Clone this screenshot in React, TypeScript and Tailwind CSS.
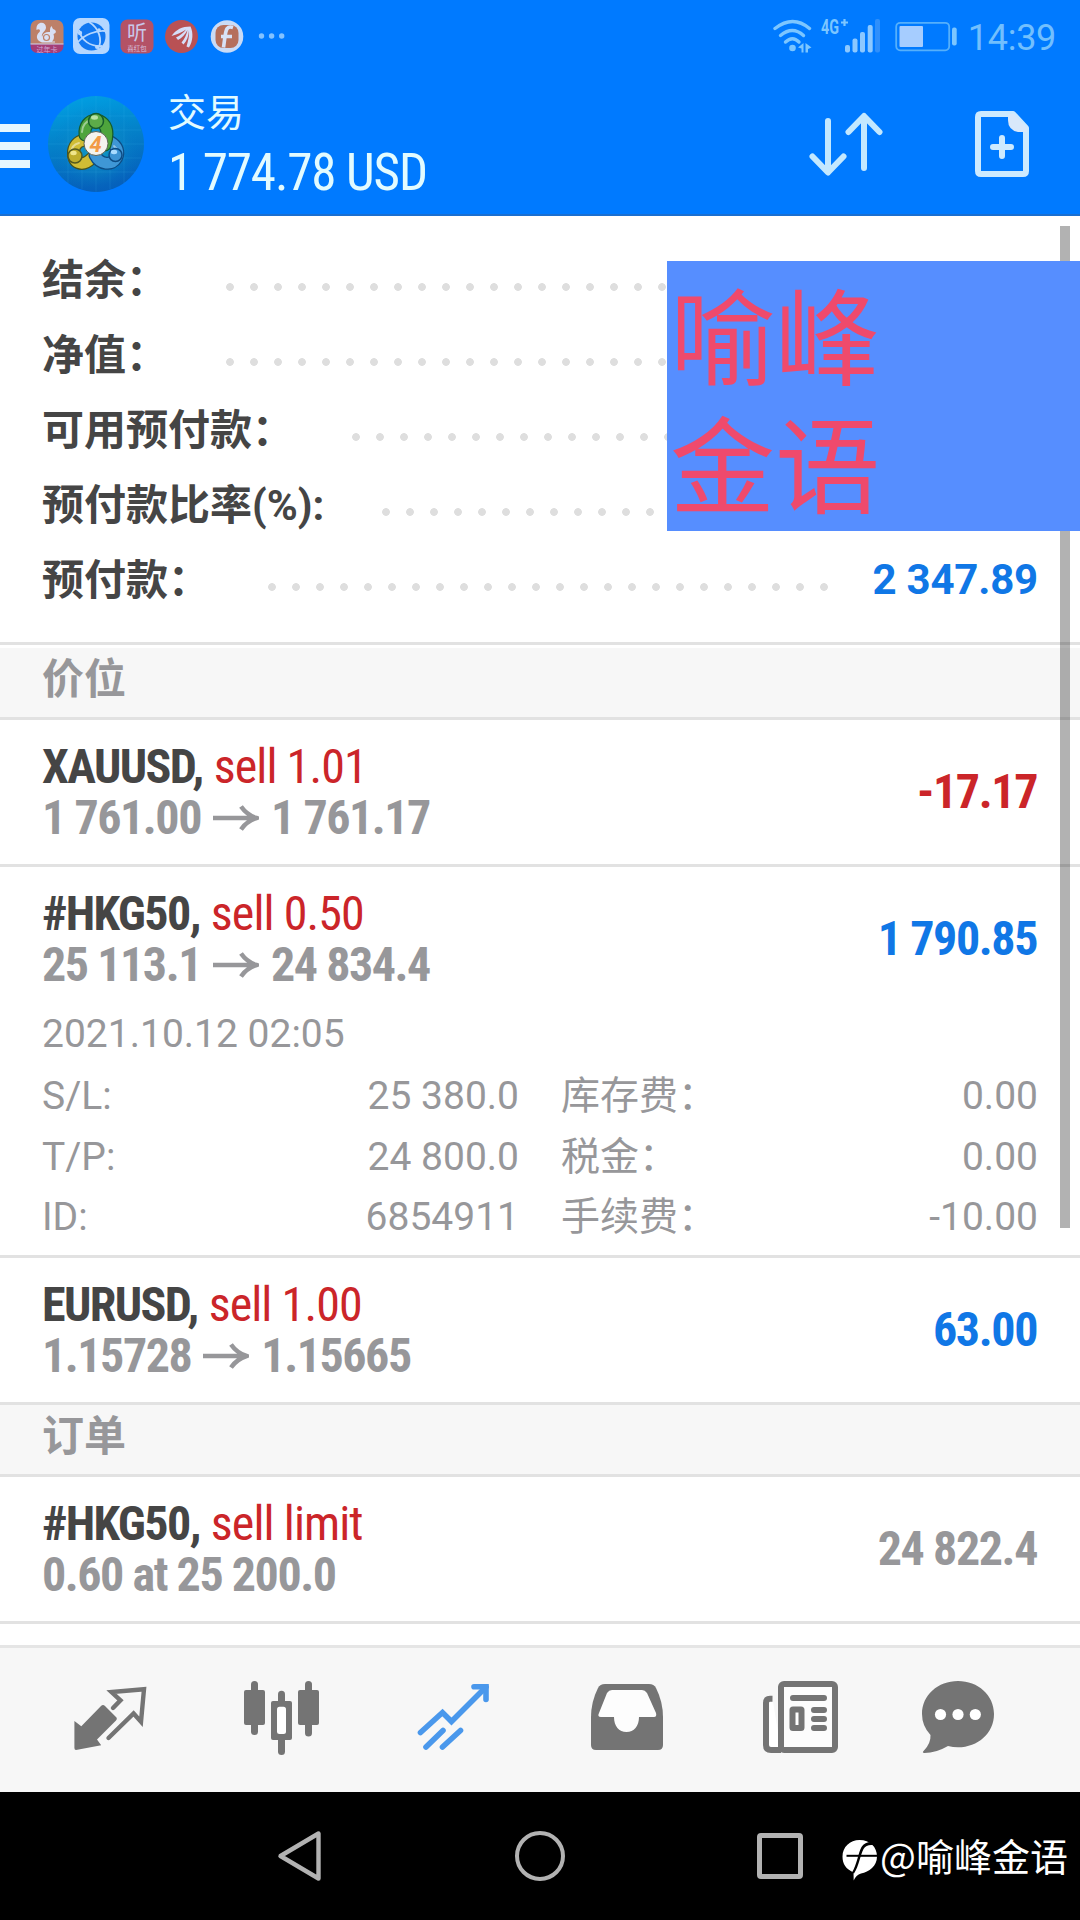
import type { ReactNode } from "react";

type Summary = { label: string; value?: string };

type Position = {
  symbol: string;
  action: string;
  from?: string;
  to?: string;
  note?: string;
  value: string;
  tone: "up" | "down" | "muted";
};

const SUMMARY: Summary[] = [
  { label: "结余：" },
  { label: "净值：" },
  { label: "可用预付款：" },
  { label: "预付款比率(%):" },
  { label: "预付款：", value: "2 347.89" },
];

const DETAILS = [
  ["S/L:", "25 380.0", "库存费：", "0.00"],
  ["T/P:", "24 800.0", "税金：", "0.00"],
  ["ID:", "6854911", "手续费：", "-10.00"],
];

const TONES = {
  up: "text-[#1077e6]",
  down: "text-[#cb2529]",
  muted: "text-[#97979a]",
};

const condensed = "font-['Roboto_Condensed',Roboto,sans-serif] [font-stretch:75%]";

function StatusBar() {
  return (
    <div className="flex h-[72px] shrink-0 items-center pl-[30px] pr-[24px]">
      <svg width="262" height="40" viewBox="0 0 262 40">
        {/* squirrel app */}
        <clipPath id="uc">
          <rect x="0.5" y="4" width="33" height="33" rx="7" />
        </clipPath>
        <g clipPath="url(#uc)">
          <rect y="4" width="34" height="24" fill="#bd8069" />
          <rect y="28" width="34" height="10" fill="#a43d77" />
        </g>
        <path d="M0.5 28H33.500" stroke="#cfd6f0" strokeWidth="1" />
        <path
          d="M6.500 14C5.500 5 16 4.500 16 11.500c0 4-5 5-4 9.500 1-4 4-5.500 8-5 0-3 0-4.500 1.500-6l1.500 3c3.500 1 4 4 0.500 5 1 3 0.500 6-1.500 7.500h3v1H12c-6-2-6.500-7-2.500-10.500 1.500-2-0.500-4-3-2Z"
          fill="#d9e0f5"
        />
        <circle cx="16.500" cy="21.500" r="3" fill="none" stroke="#bd8069" strokeWidth="1.200" />
        <text x="17" y="35.500" fontSize="7" textAnchor="middle" fill="#cda3d2" className="font-['Noto_Sans_CJK_SC',sans-serif]">
          过年卡
        </text>
        {/* browser */}
        <rect x="43" y="2" width="36.500" height="36" rx="7" fill="#b5d7ff" />
        <circle cx="61.500" cy="20.500" r="14" fill="#1178f2" />
        <g fill="none" stroke="#b5d7ff" strokeWidth="1.800">
          <path d="M59 6C69 12 73 24 68 33" />
          <path d="M75 15C66 14 54 19 48 26" />
          <path d="M49 14C51 24 60 31 72 30" />
        </g>
        <g fill="#b5d7ff">
          <circle cx="50" cy="17" r="2.200" />
          <circle cx="69" cy="14" r="1.800" />
          <circle cx="67" cy="31" r="2" />
        </g>
        {/* audio app */}
        <rect x="90.500" y="3.500" width="33" height="34" rx="7" fill="#b45266" />
        <text x="107" y="24" fontSize="20" textAnchor="middle" fill="#c9c8ea" className="font-['Noto_Sans_CJK_SC',sans-serif]">
          听
        </text>
        <text x="107" y="35" fontSize="6.500" textAnchor="middle" fill="#d5bfdd" className="font-['Noto_Sans_CJK_SC',sans-serif]">
          喜红包
        </text>
        {/* wing */}
        <circle cx="151.500" cy="20.500" r="16.500" fill="#b95154" />
        <path
          d="M141.500 20C146 13.500 152 10.500 160.500 10.500C163.500 17 163 25 159 31.500L156.500 30.500C158 25 159.500 20 159 14.500C158.500 20 157 25 153.500 28.500L151.500 26.500C154.500 23 156.500 19 157.500 14C155 18.500 152 22 148 24L146 21.500C150 19.500 153.500 17 156 13.500C152 16.500 147 18.500 141.500 20Z"
          fill="#d5def8"
        />
        {/* f badge */}
        <circle cx="197" cy="20.500" r="16.300" fill="#c9dbf6" />
        <rect x="185.500" y="9" width="23" height="23" rx="8" fill="#b56f5c" />
        <path d="M203 11.500c-6-2-7 2-8 9l-1.500 11M191 20.500h11" fill="none" stroke="#d8e2f7" strokeWidth="3.600" />
        {/* overflow */}
        <g fill="#83c2ff">
          <circle cx="231.500" cy="20" r="2.700" />
          <circle cx="241.600" cy="20" r="2.700" />
          <circle cx="251.700" cy="20" r="2.700" />
        </g>
      </svg>
      <svg className="ml-auto" width="188" height="40" viewBox="0 0 188 40">
        {/* wifi */}
        <g fill="none" stroke="#7cc6ff" strokeWidth="3.400" strokeLinecap="round">
          <path d="M5 12.500Q23 -1.500 39.500 12.500" />
          <path d="M10.500 19.500Q22.500 9.500 33.500 19.500" />
          <path d="M15.500 26Q22.500 19.500 29 26" />
        </g>
        <circle cx="22.500" cy="32" r="3.300" fill="#7cc6ff" />
        <path d="M28 31.500l5.500-4.500v9.500H31.500v-4ZM35.500 27l6 4.500-3.500 1.500v3.500h-2.500Z" fill="#7cc6ff" />
        <text x="51" y="17.500" fontSize="20" fontWeight="700" textLength="18" lengthAdjust="spacingAndGlyphs" fill="#7cc6ff" className="font-[Roboto,sans-serif]">
          4G
        </text>
        <path d="M71 6.500h7M74.500 3v7" stroke="#7cc6ff" strokeWidth="2.200" />
        {/* signal */}
        <g fill="#8cc8ff">
          <rect x="75" y="29" width="5" height="7.500" rx="2" />
          <rect x="82.500" y="22.500" width="5" height="14" rx="2" />
          <rect x="90" y="16" width="5" height="20.500" rx="2" />
          <rect x="97.700" y="9" width="5" height="27.500" rx="2" />
          <rect x="105" y="3" width="5" height="33.500" rx="2" fill="#2f8ffb" />
        </g>
        {/* battery */}
        <rect x="126.200" y="6.800" width="53" height="27.500" rx="4" fill="none" stroke="#55b0fb" strokeWidth="1.800" />
        <rect x="129.500" y="10" width="23.500" height="21" rx="1" fill="#a6cdff" />
        <rect x="182" y="11.500" width="4.700" height="18" rx="2" fill="#7cc6ff" />
      </svg>
      <span className="ml-[10px] mt-[3px] font-[Roboto,sans-serif] text-[36px] leading-[40px] tracking-[-0.3px] text-[#72bffd]">14:39</span>
    </div>
  );
}

function AppLogo() {
  return (
    <svg width="96" height="96" viewBox="0 0 96 96">
      <defs>
        <linearGradient id="sea" x1="0" y1="0" x2="0.200" y2="1">
          <stop offset="0" stopColor="#00a3e6" />
          <stop offset="0.500" stopColor="#0482c9" />
          <stop offset="1" stopColor="#0560bb" />
        </linearGradient>
        <radialGradient id="glow" cx="0.500" cy="0.550" r="0.450">
          <stop offset="0" stopColor="#16b0c0" stopOpacity="0.800" />
          <stop offset="1" stopColor="#0a7cc9" stopOpacity="0" />
        </radialGradient>
      </defs>
      <circle cx="48" cy="48" r="48" fill="url(#sea)" />
      <circle cx="48" cy="48" r="48" fill="url(#glow)" />
      <path
        d="M20 9v78M34 3v90M48 0v96M62 3v90M76 9v78M9 20h78M3 34h90M0 48h96M3 62h90M9 76h78"
        stroke="#4dbcf0"
        strokeOpacity="0.150"
      />
      <g fill="none" strokeLinecap="round">
        <path d="M44 62C34 72 24 67 25.500 55c1-7 6-11 13-11" stroke="#47531f" strokeWidth="13" />
        <path d="M44 62C34 72 24 67 25.500 55c1-7 6-11 13-11" stroke="#d0bd35" strokeWidth="10.500" />
        <path d="M47 59C52 69 64 70 68.500 62c3-6 1-12-6-16" stroke="#0d4c84" strokeWidth="13" />
        <path d="M47 59C52 69 64 70 68.500 62c3-6 1-12-6-16" stroke="#3f97d6" strokeWidth="10.500" />
        <path d="M37 39c-2-19 22-20 22-1 0 4-1 8-2 11" stroke="#165c2c" strokeWidth="13" />
        <path d="M37 39c-2-19 22-20 22-1 0 4-1 8-2 11" stroke="#4ea43c" strokeWidth="10.500" />
        <path d="M34 36c0-6 4-11 9-12M23 58c0-6 3-10 8-11M66 50c4 3 5 8 3 12" stroke="#ffffff" strokeOpacity="0.450" strokeWidth="2" />
      </g>
      <circle cx="48" cy="25" r="7.500" fill="#5cac49" stroke="#165c2c" strokeWidth="1.500" />
      <circle cx="27" cy="60" r="7" fill="#bfae2d" stroke="#53591f" strokeWidth="1.500" />
      <circle cx="67.500" cy="59" r="6.500" fill="#3d94d4" stroke="#0d4c84" strokeWidth="1.500" />
      <ellipse cx="46.500" cy="21.500" rx="3.500" ry="2.200" fill="#b9e2a5" />
      <ellipse cx="25.500" cy="57" rx="3.200" ry="2.200" fill="#f0e68c" />
      <ellipse cx="66" cy="56" rx="3.200" ry="2.200" fill="#a9dcff" />
      <circle cx="48" cy="47.500" r="12" fill="#f4f3ee" stroke="#5d6355" strokeWidth="1" />
      <text x="47.500" y="55.500" fontSize="22" fontWeight="700" fontStyle="italic" textAnchor="middle" fill="#f29a45" className="font-[Roboto,sans-serif]">
        4
      </text>
    </svg>
  );
}

function Header() {
  return (
    <header className="flex h-[216px] flex-col border-b-2 border-[#1b6fd0] bg-[#007aff]">
      <StatusBar />
      <div className="flex h-[144px] shrink-0 items-center">
        <div className="flex w-[30px] flex-col gap-[10px] pt-1">
          <span className="h-2 bg-[#e6f7ff]" />
          <span className="h-2 bg-[#e6f7ff]" />
          <span className="h-2 bg-[#e6f7ff]" />
        </div>
        <div className="ml-[18px]">
          <AppLogo />
        </div>
        <div className="ml-[24px] pt-1.5 text-[#e2fbff]">
          <div className="font-[Roboto,'Noto_Sans_CJK_SC',sans-serif] text-[38px] leading-[52px]">交易</div>
          <div className={`${condensed} text-[51px] leading-[68px] tracking-[-1.1px]`}>1 774.78 USD</div>
        </div>
        <svg className="ml-auto mr-[92px]" width="74" height="66" viewBox="0 0 74 66" fill="none" stroke="#c3e8ff" strokeWidth="6" strokeLinecap="round" strokeLinejoin="round">
          <path d="M19 10V61M3.500 45.500L19 61.500L34.500 45.500" />
          <path d="M55 57V6M39.500 21L55 5L70.500 21" />
        </svg>
        <svg className="mr-[51px]" width="54" height="66" viewBox="0 0 54 66">
          <path d="M6 3H38L51 17V60q0 3-3 3H6q-3 0-3-3V6q0-3 3-3Z" fill="none" stroke="#cdeaff" strokeWidth="6" strokeLinejoin="round" />
          <path d="M33 3H39L52 17V21H43Q33 19 33 9Z" fill="#d9e8fa" />
          <path d="M27 27V45M18 36H36" stroke="#cdeaff" strokeWidth="6" strokeLinecap="round" />
        </svg>
      </div>
    </header>
  );
}

function SectionTitle({ children }: { children: ReactNode }) {
  return (
    <div className="h-[72px] border-b-[3px] border-[#e2e2e2] bg-[#f7f7f7] pl-[42px] text-[42px] font-bold leading-[64px] text-[#97979a]">
      {children}
    </div>
  );
}

function LongArrow() {
  return (
    <svg width="46" height="26" viewBox="0 0 46 26" fill="none" stroke="#97979a" strokeWidth="4.500">
      <path d="M0 13H43M28 1.500Q34 10 43.500 13Q34 16 28 24.500" />
    </svg>
  );
}

function PositionRow({ position, children }: { position: Position; children?: ReactNode }) {
  const { symbol, action, from, to, note, value, tone } = position;
  return (
    <div className="border-b-[3px] border-[#e2e2e2]">
      <div className={`${condensed} flex h-[144px] items-center justify-between px-[42px] text-[48px]`}>
        <div className="leading-[51px]">
          <div>
            <span className="font-bold tracking-[-1.6px] text-[#454545]">{symbol},</span>{" "}
            <span className="tracking-[-0.9px] text-[#cb2529]">{action}</span>
          </div>
          <div className="flex items-center gap-[12px] font-bold tracking-[-1.45px] text-[#97979a]">
            {note ?? (
              <>
                {from}
                <LongArrow />
                {to}
              </>
            )}
          </div>
        </div>
        <span className={`pr-px font-bold tracking-[-1.4px] ${TONES[tone]}`}>{value}</span>
      </div>
      {children}
    </div>
  );
}

function NavBar() {
  return (
    <nav className="flex h-[147px] items-center border-t-[3px] border-[#e5e5e5] bg-[#f7f7f7] pl-6 text-[#747474]">
      <div className="flex w-[172px] justify-center">
        <svg width="80" height="80" viewBox="0 0 80 80">
          <path d="M4.400 41L11.300 46.300L31 26Q33 24 35 26L46.500 37.500Q47.500 39 46 40.500L27 59.500L31.200 65.300L6 70Q4.400 70 4.400 68Z" fill="currentColor" />
          <path d="M43 28L50.500 20.300L41.500 12L74 9.200L71 41.700L63.600 33.500L38.500 58" fill="none" stroke="currentColor" strokeWidth="4.400" strokeLinecap="round" />
        </svg>
      </div>
      <div className="flex w-[172px] justify-center">
        <svg width="80" height="80" viewBox="0 0 80 80" fill="currentColor">
          <rect x="2" y="10" width="21" height="35" rx="2" />
          <rect x="9" y="1" width="7" height="54" rx="3.500" />
          <rect x="29" y="21" width="21" height="39" rx="2" />
          <rect x="36" y="10.700" width="7" height="64.300" rx="3.500" />
          <rect x="35" y="26.700" width="9" height="27.300" rx="2.500" fill="#fff" />
          <rect x="56" y="10" width="21" height="35" rx="2" />
          <rect x="63" y="1" width="7" height="55.500" rx="3.500" />
        </svg>
      </div>
      <div className="flex w-[172px] justify-center">
        <svg width="80" height="80" viewBox="0 0 80 80" fill="none" stroke="#4a98ec" strokeWidth="5.600" strokeLinecap="round" strokeLinejoin="round">
          <path d="M6.500 52.500L28.500 32.500L37.500 41.500L72 7" strokeLinejoin="miter" />
          <path d="M60 6.700H72V19.500" strokeLinejoin="miter" />
          <path d="M12 67L29 50.500M28.500 67L46.500 50.500" />
        </svg>
      </div>
      <div className="flex w-[172px] justify-center">
        <svg width="80" height="80" viewBox="0 0 80 80" fill="currentColor">
          <path d="M19 4h44q5 0 7 4Q77 22 77 37V65q0 5-5 5H10q-5 0-5-5V37Q5 22 12 8q2-4 7-4Z" />
          <path d="M26 10h30q3 0 5 3l9 20q1 4-2 4H53c0 9-5 15-12.500 15S28 46 28 37H15q-4 0-2-4l8-20q2-3 5-3Z" fill="#fdfdfd" />
        </svg>
      </div>
      <div className="flex w-[172px] justify-center">
        <svg width="86" height="80" viewBox="0 0 86 80" fill="none" stroke="currentColor" strokeWidth="6">
          <path d="M17.500 18.700H15Q11 18.700 11 23V65q0 5 5 5H26" fill="#fff" />
          <rect x="26" y="4" width="54" height="66" rx="3" fill="#fcfcfc" />
          <path d="M38 18H69M59 30H69M59 39H69M59 48H69" strokeLinecap="round" />
          <rect x="37.500" y="29.500" width="9" height="18.500" rx="0.500" fill="#fff" />
        </svg>
      </div>
      <div className="flex w-[148px] justify-center">
        <svg width="80" height="80" viewBox="0 0 80 80" fill="currentColor">
          <path d="M40 1C60 1 76 15 76 34S60 67.300 40 67.300Q35 67.300 30 66Q18 73 6.500 73Q3.500 73 6 70.500Q13 63 12.500 55Q4 46 4 34C4 15 20 1 40 1Z" />
          <circle cx="22.500" cy="34.500" r="5.600" fill="#fff" />
          <circle cx="40" cy="34.500" r="5.600" fill="#fff" />
          <circle cx="57.300" cy="34.500" r="5.600" fill="#fff" />
        </svg>
      </div>
    </nav>
  );
}

function SystemBar() {
  return (
    <div className="flex h-32 items-center bg-black pl-[276px]">
      <svg width="48" height="56" viewBox="0 0 48 56" fill="none" stroke="#b2b2b2" strokeWidth="4.400" strokeLinejoin="round">
        <path d="M4.500 28L42.500 5.500V50.500Z" />
      </svg>
      <span className="ml-[191px] size-[50px] rounded-full border-[4px] border-[#b2b2b2]" />
      <span className="ml-[192px] h-[46px] w-[46px] rounded-[4px] border-[5px] border-[#b2b2b2]" />
      <svg className="ml-[39px] mt-[10px]" width="36" height="44" viewBox="0 0 36 44">
        <path d="M17.500 1C28 1 35 8 35 17.500C35 27 27 33 19 34.500Q14 36 11.700 41.500L11.500 33.500C4 30 0.500 25 0.500 17.500C0.500 8 8 1 17.500 1Z" fill="#fff" />
        <path d="M36 5.500C31 1.500 23 2.500 19.500 8C16 14 15.500 24 10 33.500L12 34.500C17 27 18 17 21.500 10C24 5.500 30 5 36 7.500Z" fill="#000" />
        <path d="M4.500 16.800H36" stroke="#000" strokeWidth="2" />
      </svg>
      <span className="mb-[3px] ml-[2px] whitespace-nowrap font-['Noto_Sans_CJK_SC',sans-serif] text-[38px] leading-[50px] text-white">@喻峰金语</span>
    </div>
  );
}

export default function App() {
  return (
    <div className="flex h-[1920px] w-[1080px] flex-col overflow-hidden bg-white font-[Roboto,'Noto_Sans_CJK_SC',sans-serif]">
      <Header />
      <main className="relative flex-1">
        <section className="flex h-[432px] flex-col border-b-[3px] border-white pt-[26px] shadow-[inset_0_-3px_0_#e2e2e2]">
          {SUMMARY.map(({ label, value }) => (
            <div key={label} className="flex h-[75px] items-center px-[42px] text-[42px] font-bold leading-[75px]">
              <span className="mt-[2px] whitespace-nowrap text-[#454545]">{label}</span>
              <span className="ml-[50px] mr-[41px] mt-[14px] h-2 flex-1 bg-[radial-gradient(circle_at_12px_4px,#dedede_3.500px,transparent_4.200px)] bg-[length:24px_8px]" />
              <span className={`tracking-[-0.2px] ${TONES.up}`}>{value}</span>
            </div>
          ))}
        </section>
        <SectionTitle>价位</SectionTitle>
        <PositionRow position={{ symbol: "XAUUSD", action: "sell 1.01", from: "1 761.00", to: "1 761.17", value: "-17.17", tone: "down" }} />
        <PositionRow position={{ symbol: "#HKG50", action: "sell 0.50", from: "25 113.1", to: "24 834.4", value: "1 790.85", tone: "up" }}>
          <div className="h-[244px] px-[42px] text-[39px] leading-[60px] text-[#97979a]">
            <div className="h-[55px] leading-[46px]">2021.10.12 02:05</div>
            {DETAILS.map(([left, leftValue, right, rightValue]) => (
              <div key={left} className="flex h-[60.5px]">
                <span className="w-[120px]">{left}</span>
                <span className="w-[357px] text-right">{leftValue}</span>
                <span className="ml-[42px] whitespace-nowrap">{right}</span>
                <span className="ml-auto">{rightValue}</span>
              </div>
            ))}
          </div>
        </PositionRow>
        <PositionRow position={{ symbol: "EURUSD", action: "sell 1.00", from: "1.15728", to: "1.15665", value: "63.00", tone: "up" }} />
        <SectionTitle>订单</SectionTitle>
        <PositionRow position={{ symbol: "#HKG50", action: "sell limit", note: "0.60 at 25 200.0", value: "24 822.4", tone: "muted" }} />
        {/* scroll thumb */}
        <div className="absolute left-[1060px] top-[10px] h-[1002px] w-[10px] bg-black/30" />
        <div className="absolute right-0 top-[45px] h-[270px] w-[413px] bg-[#568eff] pl-[3px] pt-[6px] font-['Noto_Sans_CJK_SC',sans-serif] text-[105px] leading-[128px] text-[#ef4a6c]">
          <div>喻峰</div>
          <div>金语</div>
        </div>
      </main>
      <NavBar />
      <SystemBar />
    </div>
  );
}
